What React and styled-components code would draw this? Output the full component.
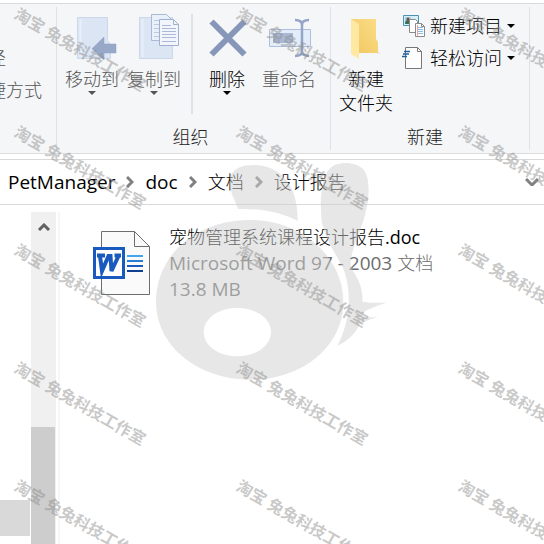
import React from 'react';
import styled, { createGlobalStyle } from 'styled-components';

const GlobalStyle = createGlobalStyle`
    * {
        box-sizing: border-box;
    }

    body {
        margin: 0;
        background: #fff;
        font-family: "Open Sans", "Noto Sans CJK SC", sans-serif;
        font-size: 18px;
        line-height: 24px;
        color: #000;
    }

    button {
        padding: 0;
        border: 0;
        background: none;
        font: inherit;
        color: inherit;
    }
`;

const Window = styled.div`
    position: relative;
    display: flex;
    flex-direction: column;
    min-height: 100vh;
    overflow: hidden;
`;

const Ribbon = styled.div`
    display: flex;
    margin-top: 3px;
    padding: 3px 0;
    border-top: 1px solid #dadbdc;
    border-bottom: 1px solid #dadbdc;
    background: #f5f6f8;
    font-weight: 300;
`;

const Group = styled.section`
    display: flex;
    flex-direction: column;
    justify-content: space-between;
    padding: 7px ${({ $end }) => $end || '10px'} 1px 4px;
    border-right: 1px solid #dfe1e4;
`;

const ClippedGroup = styled(Group)`
    width: 57px;
    padding: 39px 14px 0 0;
    align-items: flex-end;
    justify-content: flex-start;
    overflow: hidden;
`;

const Tools = styled.div`
    display: flex;
    height: 111px;
`;

const GroupTitle = styled.div`
    text-align: center;
    color: #222;
`;

const ToolButton = styled.button`
    display: flex;
    flex-direction: column;
    align-items: center;
    width: 62px;
    color: ${({ $muted }) => ($muted ? '#555' : '#000')};
    white-space: nowrap;
`;

const ToolIcon = styled.svg`
    width: 48px;
    height: 48px;
    margin-bottom: 5px;
    overflow: visible;
`;

const Divider = styled.div`
    width: 2px;
    height: 100px;
    margin: 0 3px 0 6px;
    background: #dfe1e4;
`;

const RowList = styled.div`
    display: flex;
    flex-direction: column;
    gap: 8px;
    padding-left: ${({ $indent }) => ($indent ? '6px' : '0')};
`;

const RowButton = styled.button`
    display: flex;
    align-items: center;
    gap: 5px;
    height: 24px;
    color: ${({ $muted }) => ($muted ? '#555' : '#000')};
    white-space: nowrap;
`;

const RowIcon = styled.svg`
    width: 22px;
    height: 22px;
    overflow: visible;
`;

const ArrowIcon = styled.svg`
    width: 8px;
    height: 4px;
    fill: currentColor;
`;

const AddressBar = styled.nav`
    display: flex;
    align-items: center;
    justify-content: space-between;
    height: 46px;
    margin-top: 5px;
    padding: 0 5px 0 8px;
    border-top: 1px solid #d9d9d9;
    border-bottom: 1px solid #d9d9d9;
`;

const Crumbs = styled.ol`
    display: flex;
    align-items: center;
    gap: 11px;
    margin: 0;
    padding: 0;
    list-style: none;
`;

const Crumb = styled.li`
    display: flex;
    align-items: center;
    gap: 11px;
`;

const CrumbLink = styled.a`
    font-size: ${({ $latin }) => ($latin ? '19px' : '18px')};
    font-weight: ${({ $latin }) => ($latin ? 400 : 300)};
    color: #000;
    text-decoration: none;
`;

const ChevronIcon = styled.svg`
    width: ${({ $wide }) => ($wide ? '14px' : '8px')};
    height: ${({ $wide }) => ($wide ? '8px' : '12px')};
    fill: none;
    stroke: ${({ $dark }) => ($dark ? '#606060' : '#808080')};
    stroke-width: 3;
`;

const Body = styled.main`
    display: flex;
    flex: 1;
`;

const TreePane = styled.aside`
    display: flex;
    flex-direction: column;
    justify-content: flex-end;
    width: 30px;
    padding-bottom: 8px;
`;

const TreeSelection = styled.div`
    height: 36px;
    background: #d9d9d9;
`;

const ScrollTrack = styled.div`
    display: flex;
    flex-direction: column;
    width: 25px;
    margin: 7px 2px 0 1px;
    background: #f0f0f0;
`;

const ScrollUp = styled.button`
    display: flex;
    align-items: center;
    justify-content: center;
    height: 29px;
`;

const ScrollThumb = styled.div`
    flex: 1;
    width: 24px;
    margin-top: 186px;
    background: #cdcdcd;
`;

const FileList = styled.div`
    flex: 1;
    margin-top: 7px;
    padding: 12px 0 0 33px;
    border-left: 2px solid #f6f6f6;
`;

const FileItem = styled.a`
    display: flex;
    gap: 19px;
    text-decoration: none;
    white-space: nowrap;
`;

const FileIcon = styled.svg`
    width: 57px;
    height: 66px;
    margin-top: 6px;
`;

const FileText = styled.div`
    display: flex;
    flex-direction: column;
    line-height: 26px;
`;

const FileName = styled.span`
    color: #000;
`;

const FileMeta = styled.span`
    font-size: 19px;
    color: #6d6d6d;
`;

const Han = styled.span`
    font-size: 18px;
    font-weight: 300;
`;

const Overlay = styled.div`
    position: absolute;
    inset: 0;
    overflow: hidden;
    pointer-events: none;
`;

const Rabbit = styled.svg`
    position: absolute;
    top: 155px;
    left: 140px;
    width: 250px;
    height: 235px;
    fill: rgba(207, 207, 207, 0.5);
`;

const MarkGrid = styled.div`
    display: grid;
    grid-template-columns: repeat(3, 222px);
    grid-auto-rows: 118px;
    padding: 2px 0 0 22px;
`;

const Mark = styled.span`
    font-size: 16px;
    font-weight: 700;
    color: rgba(140, 140, 140, 0.48);
    white-space: nowrap;
    transform: rotate(30deg);
    transform-origin: 0 0;
`;

function Arrow() {
    return (
        <ArrowIcon viewBox="0 0 8 4">
            <path d="M0 0h8L4 4z" />
        </ArrowIcon>
    );
}

function MoveIcon() {
    return (
        <ToolIcon viewBox="0 0 48 48">
            <path d="M9.500 3.500h30v23l3 4v14h-33z" fill="#dbe5f4" stroke="#cbd7eb" />
            <path d="M12.500 5v38" stroke="#e8effa" strokeWidth="2" />
            <path d="M24 34.700L36 23v7h12v9H36v7z" fill="#98a8c8" stroke="#8fa1c4" strokeWidth="0.500" />
        </ToolIcon>
    );
}

function CopyIcon() {
    return (
        <ToolIcon viewBox="0 0 48 48">
            <path d="M9.500 3.500h33v41h-33z" fill="#dbe5f4" stroke="#cbd7eb" />
            <path d="M12.500 5v38" stroke="#e8effa" strokeWidth="2" />
            <path d="M21.500 .5h15l5 5v21h-20z" fill="#eaf0f9" stroke="#a9b9d6" />
            <path d="M24 6.500h10M24 10.500h10M24 14.500h10M24 18.500h10M24 22.500h10" stroke="#bccae1" />
            <path d="M29.500 5.500h14l5 5v21h-19z" fill="#f2f6fc" stroke="#a0b1d0" />
            <path d="M43.500 5.500v5h5" fill="none" stroke="#a0b1d0" />
            <path d="M32 11.500h9M32 14.500h14M32 17.500h14M32 20.500h14M32 23.500h14M32 27.500h14" stroke="#a9b9d6" />
        </ToolIcon>
    );
}

function DeleteIcon() {
    return (
        <ToolIcon viewBox="0 0 48 48">
            <path d="M8.500 7.500l33 33M41.500 7.500l-33 33" stroke="#8797b9" strokeWidth="6" />
        </ToolIcon>
    );
}

function RenameIcon() {
    return (
        <ToolIcon viewBox="0 0 48 48">
            <path d="M4.500 15.500h41v17h-41z" fill="#e3ecf9" stroke="#afbfdb" />
            <path d="M8 19h20v10H8z" fill="#a9b8d3" />
            <path d="M30 6c4 0 7 1 7 5v26c0 4-3 5-7 5M44 6c-4 0-7 1-7 5v26c0 4 3 5 7 5" fill="none" stroke="#94a5c7" strokeWidth="2.500" />
        </ToolIcon>
    );
}

function FolderIcon() {
    return (
        <ToolIcon viewBox="0 0 48 48">
            <defs>
                <linearGradient id="folderBack" x1="0" y1="1" x2="1" y2="0">
                    <stop offset="0" stopColor="#f0c75f" />
                    <stop offset="1" stopColor="#fbdd88" />
                </linearGradient>
            </defs>
            <path d="M35 38l4 1-4 1z" fill="#dedfe2" />
            <path d="M9 5h25v20l2 3v11H17z" fill="url(#folderBack)" />
            <path d="M9 5l8 5v35l-8-5z" fill="#ffe8a2" />
        </ToolIcon>
    );
}

function NewItemIcon() {
    return (
        <RowIcon viewBox="0 0 22 22">
            <path d="M.5 .5h15v10H.5z" fill="#d6eef8" stroke="#4a93b5" />
            <path d="M2 2h6v7H2z" fill="#9fd0e6" />
            <path d="M2 9c0-3 1-4 3-4s3 1 3 4z" fill="#3b6e57" />
            <circle cx="5" cy="4" r="1.500" fill="#7b4a35" />
            <path d="M6.500 4.500h6l2 2v11h-8z" fill="#fff" stroke="#8a8a8a" />
            <path d="M12.500 8.500h6l3 3v10h-9z" fill="#fff" stroke="#8a8a8a" />
            <path d="M18.500 8.500v3h3" fill="none" stroke="#8a8a8a" />
            <path d="M14 12.500h6M14 14.500h6M14 16.500h6M14 18.500h6" stroke="#8bbbe5" />
            <path d="M14.500 10v11" stroke="#f2a0a0" />
        </RowIcon>
    );
}

function EasyAccessIcon() {
    return (
        <RowIcon viewBox="0 0 22 22">
            <path d="M2.500 .5h12l4 4v17h-16z" fill="#fdfdfd" stroke="#777" />
            <path d="M14.500 .5v4h4" fill="none" stroke="#777" />
            <path d="M1 4.500h6M0 7h6M-1 9.500h5" stroke="#1f5f9e" strokeWidth="1.500" />
        </RowIcon>
    );
}

function WordIcon() {
    return (
        <FileIcon viewBox="0 0 57 66">
            <path d="M8.500 1.500h33l15 15v48h-48z" fill="#fafafa" stroke="#6e6e6e" />
            <path d="M41.500 1.500v15h15" fill="none" stroke="#6e6e6e" />
            <path d="M0 17h32v32H0z" fill="#185abd" />
            <path d="M3 20h26v26H3z" fill="#fff" />
            <path
                d="M7 26l2 15L15.500 26h2l1 15L25.500 26M4 25.500h8M21.500 25.500H28"
                fill="none"
                stroke="#185abd"
                strokeWidth="4"
            />
            <path d="M34 26h16" stroke="#41a5ee" strokeWidth="2" />
            <path d="M34 31h16" stroke="#2b7cd3" strokeWidth="2" />
            <path d="M34 36h16" stroke="#185abd" strokeWidth="2" />
            <path d="M34 41h16" stroke="#103f91" strokeWidth="2" />
        </FileIcon>
    );
}

function Tool({ icon, label, lines = [label], muted, menu }) {
    return (
        <ToolButton type="button" $muted={muted}>
            {icon}
            {lines.map((line) => <span key={line}>{line}</span>)}
            {menu && <Arrow />}
        </ToolButton>
    );
}

const crumbs = [
    { name: 'PetManager', latin: true },
    { name: 'doc', latin: true },
    { name: '文档' },
    { name: '设计报告' },
];
const marks = Array.from({ length: 15 }, (_, i) => i);

function App() {
    return (
        <Window>
            <GlobalStyle />

            <Ribbon>
                <ClippedGroup>
                    <RowList>
                        <RowButton type="button" $muted>复制路径</RowButton>
                        <RowButton type="button" $muted>粘贴快捷方式</RowButton>
                    </RowList>
                </ClippedGroup>

                <Group>
                    <Tools>
                        <Tool icon={<MoveIcon />} label="移动到" muted menu />
                        <Tool icon={<CopyIcon />} label="复制到" muted menu />
                        <Divider />
                        <Tool icon={<DeleteIcon />} label="删除" menu />
                        <Tool icon={<RenameIcon />} label="重命名" muted />
                    </Tools>
                    <GroupTitle>组织</GroupTitle>
                </Group>

                <Group $end="14px">
                    <Tools>
                        <Tool icon={<FolderIcon />} lines={['新建', '文件夹']} />
                        <RowList $indent>
                            <RowButton type="button">
                                <NewItemIcon />
                                新建项目
                                <Arrow />
                            </RowButton>
                            <RowButton type="button">
                                <EasyAccessIcon />
                                轻松访问
                                <Arrow />
                            </RowButton>
                        </RowList>
                    </Tools>
                    <GroupTitle>新建</GroupTitle>
                </Group>
            </Ribbon>

            <AddressBar>
                <Crumbs>
                    {crumbs.map(({ name, latin }, i) => (
                        <Crumb key={name}>
                            <CrumbLink href="#" $latin={latin}>{name}</CrumbLink>
                            {i < crumbs.length - 1 && (
                                <ChevronIcon viewBox="0 0 8 12">
                                    <path d="M1 1l5 5-5 5" />
                                </ChevronIcon>
                            )}
                        </Crumb>
                    ))}
                </Crumbs>
                <ChevronIcon viewBox="0 0 14 8" $wide>
                    <path d="M1 1l6 6 6-6" />
                </ChevronIcon>
            </AddressBar>

            <Body>
                <TreePane>
                    <TreeSelection />
                </TreePane>
                <ScrollTrack>
                    <ScrollUp type="button" aria-label="向上滚动">
                        <ChevronIcon viewBox="0 0 14 8" $wide $dark>
                            <path d="M2 7l5-5 5 5" />
                        </ChevronIcon>
                    </ScrollUp>
                    <ScrollThumb />
                </ScrollTrack>
                <FileList>
                    <FileItem href="#">
                        <WordIcon />
                        <FileText>
                            <FileName><Han>宠物管理系统课程设计报告</Han>.doc</FileName>
                            <FileMeta>Microsoft Word 97 - 2003 <Han>文档</Han></FileMeta>
                            <FileMeta>13.8 MB</FileMeta>
                        </FileText>
                    </FileItem>
                </FileList>
            </Body>

            <Overlay>
                <Rabbit viewBox="0 0 750 705">
                    <path d="M295 162C278 125 262 90 272 62C285 32 330 26 370 33C430 45 475 100 473 198C425 172 360 160 295 162z" />
                    <path d="M545 198C538 120 545 60 575 35C600 18 650 20 672 45C692 75 688 130 675 180C660 235 630 290 632 330C640 360 668 375 668 440Q700 445 738 443Q700 455 672 470Q665 482 668 487Q690 488 714 486Q680 495 660 507Q640 550 592 573C620 520 640 440 615 355C600 310 560 270 545 198z" />
                    <path fillRule="evenodd" d="M328 195C490 195 610 310 610 440C610 580 480 674 335 674C170 674 48 570 48 440C48 300 170 195 328 195zM292 459C236 459 191 490 191 531C191 572 236 604 292 604C348 604 393 572 393 531C393 490 348 459 292 459z" />
                </Rabbit>
                <MarkGrid>
                    {marks.map((i) => <Mark key={i}>淘宝 兔兔科技工作室</Mark>)}
                </MarkGrid>
            </Overlay>
        </Window>
    );
}

export default App;
